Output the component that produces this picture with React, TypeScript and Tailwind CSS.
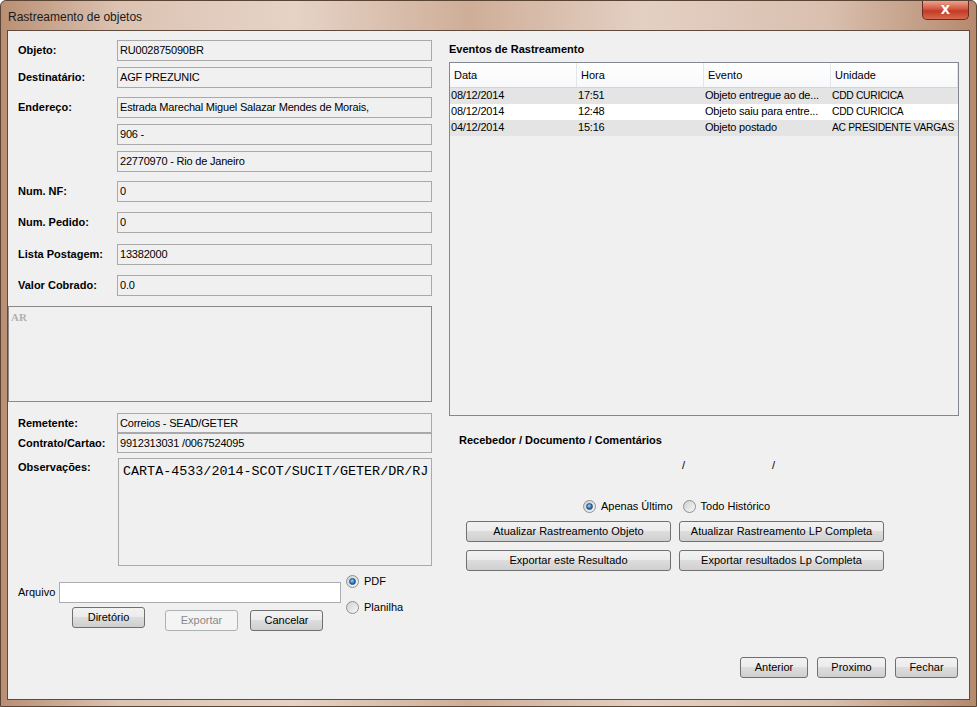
import React from "react";

const font = "font-['Liberation_Sans','Arial',sans-serif]";

function Field({ value, w = "w-[315px]", h = "h-[21px]" }: { value: string; w?: string; h?: string }) {
  return (
    <div className={`${w} ${h} flex items-center border border-[#a9a9a9] bg-[#f0f0f0] pl-[2px] text-[11px] tracking-[-0.2px] text-black`}>
      {value}
    </div>
  );
}

function Row({ label, value, mt }: { label: string; value: string; mt: string }) {
  return (
    <div className={`flex items-center ${mt}`}>
      <span className="w-[99px] text-[11px] font-bold">{label}</span>
      <Field value={value} />
    </div>
  );
}

function Btn({ children, w, disabled }: { children: React.ReactNode; w: string; disabled?: boolean }) {
  return (
    <button
      type="button"
      className={
        disabled
          ? `${w} h-[21px] rounded-[3px] border border-[#adb2b5] bg-[#f4f4f4] text-[11px] text-[#8a8a8a]`
          : `${w} h-[21px] rounded-[3px] border border-[#707070] bg-[linear-gradient(#f2f2f2,#ebebeb_50%,#dddddd_50%,#cfcfcf)] text-[11px] text-black`
      }
    >
      {children}
    </button>
  );
}

function Radio({ checked, label }: { checked?: boolean; label: string }) {
  return (
    <div className="flex h-[13px] items-center gap-[5px] leading-[13px]">
      <div className="flex h-[13px] w-[13px] items-center justify-center rounded-full border border-[#8e8f8f] bg-[linear-gradient(135deg,#d0d0d0,#f8f8f8)]">
        {checked && (
          <div className="h-[7px] w-[7px] rounded-full border border-[#1b4e86] bg-[radial-gradient(circle_at_40%_35%,#9fd2ff,#2b6db5_60%,#1a4f8c)]" />
        )}
      </div>
      <span className="text-[11px]">{label}</span>
    </div>
  );
}

const rows = [
  ["08/12/2014", "17:51", "Objeto entregue ao de...", "CDD CURICICA"],
  ["08/12/2014", "12:48", "Objeto saiu para entre...", "CDD CURICICA"],
  ["04/12/2014", "15:16", "Objeto postado", "AC PRESIDENTE VARGAS"],
];

export default function App() {
  return (
    <div
      className={`${font} flex h-[707px] w-[977px] flex-col overflow-hidden rounded-t-[6px] border border-[#5a4535] bg-[linear-gradient(90deg,#b98f73,#dcc3b2_12%,#e6d3c6_30%,#cfae98_48%,#e4d0c3_66%,#d9bfae_85%,#b58a6e)] text-black`}
    >
      <div className="flex h-[29px] shrink-0 items-start justify-between">
        <span className="pl-[7px] pt-[7px] text-[12px] text-[#1a1a1a]">Rastreamento de objetos</span>
        <div className="mr-[7px] flex h-[19px] w-[47px] items-center justify-center rounded-b-[5px] border border-t-0 border-[#6e2a22] bg-[linear-gradient(#e8a590,#d4553f_45%,#c23a25_55%,#d86a4e)]">
          <span className="font-['DejaVu_Sans',sans-serif] text-[12px] font-bold leading-none text-white">X</span>
        </div>
      </div>

      <div className="mx-[6px] mb-[6px] flex flex-1 border border-[#5d4a3d] bg-[#f0f0f0]">
        {/* left column */}
        <div className="flex w-[424px] flex-col">
          <div className="pl-[10px] pt-[9px]">
            <Row label="Objeto:" value="RU002875090BR" mt="" />
            <Row label="Destinatário:" value="AGF PREZUNIC" mt="mt-[6px]" />
            <div className="mt-[9px] flex">
              <span className="w-[99px] pt-[2px] text-[11px] font-bold">Endereço:</span>
              <div className="flex flex-col gap-[6px]">
                <Field value="Estrada Marechal Miguel Salazar Mendes de Morais," />
                <Field value="906 -" />
                <Field value="22770970 - Rio de Janeiro" />
              </div>
            </div>
            <Row label="Num. NF:" value="0" mt="mt-[9px]" />
            <Row label="Num. Pedido:" value="0" mt="mt-[10px]" />
            <Row label="Lista Postagem:" value="13382000" mt="mt-[11px]" />
            <Row label="Valor Cobrado:" value="0.0" mt="mt-[10px]" />
          </div>

          <div className="mt-[10px] h-[96px] w-[424px] border border-[#8a8a8a] pl-[2px] pt-[5px] text-[11px] leading-none">
            <span className="font-['Liberation_Serif',serif] text-[11px] font-bold text-[#b0b0b0]">AR</span>
          </div>

          <div className="pl-[10px]">
            <div className="mt-[11px] flex items-center">
              <span className="w-[99px] text-[11px] font-bold">Remetente:</span>
              <Field value="Correios - SEAD/GETER" h="h-[20px]" />
            </div>
            <div className="flex items-center">
              <span className="w-[99px] text-[11px] font-bold">Contrato/Cartao:</span>
              <Field value="9912313031  /0067524095" h="h-[20px]" />
            </div>
            <div className="mt-[5px] flex">
              <span className="w-[100px] pt-[1px] text-[11px] font-bold">Observações:</span>
              <div className="h-[108px] w-[314px] border border-[#a9a9a9] bg-[#f0f0f0] pl-[4px] pt-[6px] font-['Liberation_Mono',monospace] text-[13.4px] leading-none">
                CARTA-4533/2014-SCOT/SUCIT/GETER/DR/RJ
              </div>
            </div>

            <div className="mt-[9px] flex">
              <div className="flex flex-col">
                <div className="mt-[7px] flex items-center">
                  <span className="w-[41px] text-[11px]">Arquivo</span>
                  <div className="h-[21px] w-[282px] border border-[#abadb3] bg-white" />
                </div>
                <div className="mt-[4px] flex pl-[54px]">
                  <Btn w="w-[73px]">Diretório</Btn>
                  <div className="ml-[20px]">
                    <Btn w="w-[73px]" disabled>
                      Exportar
                    </Btn>
                  </div>
                  <div className="ml-[12px]">
                    <Btn w="w-[73px]">Cancelar</Btn>
                  </div>
                </div>
              </div>
              <div className="ml-[5px] flex flex-col gap-[13px]">
                <Radio checked label="PDF" />
                <Radio label="Planilha" />
              </div>
            </div>
          </div>
        </div>

        {/* right column */}
        <div className="ml-[17px] flex w-[510px] flex-col">
          <div className="mt-[10px] text-[11px] font-bold">Eventos de Rastreamento</div>
          <div className="mt-[4px] h-[354px] border border-[#828790] bg-[#f0f0f0]">
            <div className="grid h-[25px] grid-cols-[127px_127px_127px_1fr] border-b border-[#d5d5d5] bg-[linear-gradient(#ffffff,#f7f8fa)] text-[11px]">
              {["Data", "Hora", "Evento", "Unidade"].map((h) => (
                <div key={h} className="flex items-center border-r border-[#e3e5e8] pl-[4px] pt-[1px]">
                  {h}
                </div>
              ))}
            </div>
            {rows.map((r, i) => (
              <div
                key={i}
                className={`grid h-[16px] grid-cols-[127px_127px_127px_1fr] items-center text-[11px] tracking-[-0.2px] ${i === 1 ? "bg-white" : "bg-[#e4e4e4]"}`}
              >
                {r.map((c, j) => (
                  <span
                    key={j}
                    className={`overflow-hidden whitespace-nowrap pl-[1px] ${j === 3 ? "text-[10.3px] tracking-[-0.3px]" : ""}`}
                  >
                    {c}
                  </span>
                ))}
              </div>
            ))}
          </div>

          <div className="mt-[16px] pl-[10px] text-[11px] font-bold">Recebedor / Documento / Comentários</div>
          <div className="mt-[9px] flex text-[11px]">
            <span className="ml-[233px]">/</span>
            <span className="ml-[87px]">/</span>
          </div>

          <div className="mt-[26px] flex gap-[10px] pl-[134px]">
            <Radio checked label="Apenas Último" />
            <Radio label="Todo Histórico" />
          </div>

          <div className="mt-[8px] flex gap-[8px] pl-[17px]">
            <Btn w="w-[205px]">Atualizar Rastreamento Objeto</Btn>
            <Btn w="w-[205px]">Atualizar Rastreamento LP Completa</Btn>
          </div>
          <div className="mt-[8px] flex gap-[8px] pl-[17px]">
            <Btn w="w-[205px]">Exportar este Resultado</Btn>
            <Btn w="w-[205px]">Exportar resultados Lp Completa</Btn>
          </div>

          <div className="mb-[21px] mt-auto flex justify-end gap-[9px] pr-[1px]">
            <Btn w="w-[68px]">Anterior</Btn>
            <Btn w="w-[69px]">Proximo</Btn>
            <Btn w="w-[63px]">Fechar</Btn>
          </div>
        </div>
      </div>
    </div>
  );
}
